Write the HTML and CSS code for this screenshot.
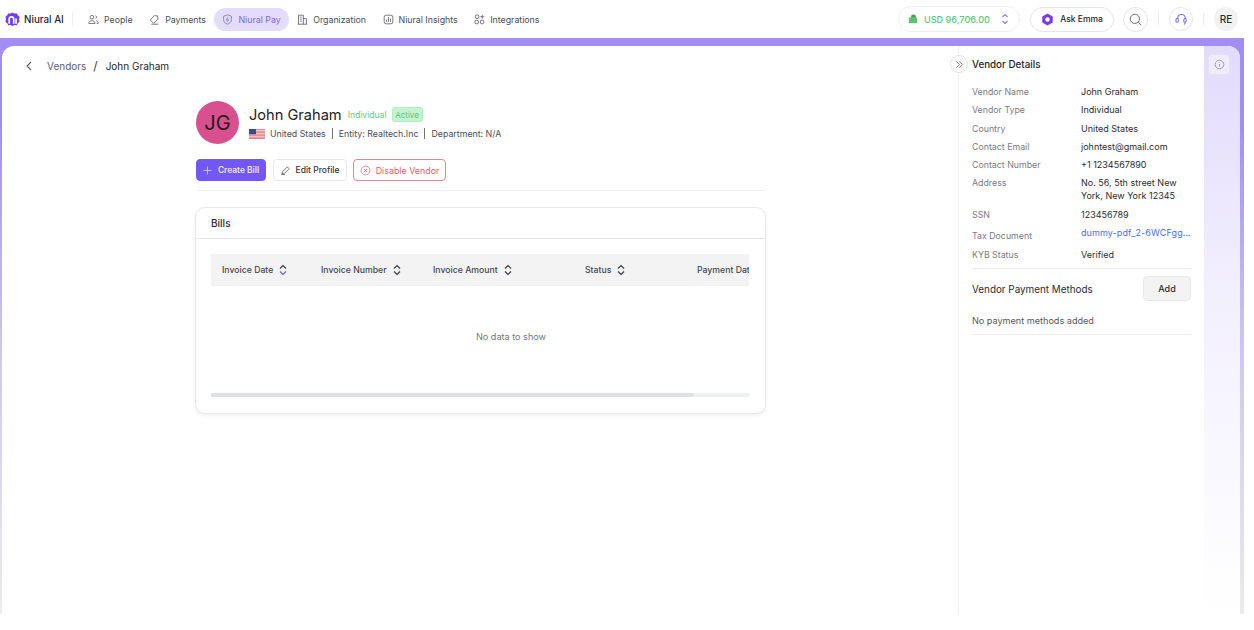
FILE: index.html
```html
<!DOCTYPE html>
<html lang="en">
<head>
<meta charset="utf-8">
<title>Vendor - John Graham</title>
<link rel="stylesheet" href="styles.css">
</head>
<body>
<div class="page">
  <header class="topbar">
    <div class="brand">
      <svg class="logo" viewBox="0 0 16 16"><path d="M8 .5l2 1.200 2.600-.2 1 2 1.900 1.600-.5 2.600.5 2.600-1.900 1.700-1 2-2.600-.2-2 1.200-2-1.200-2.600.2-1-2L.5 10.300l.5-2.600L.5 5.100l1.900-1.600 1-2 2.600.2z" fill="#6f3ff0"/><path d="M4.500 12.500V7.500a2.400 2.400 0 0 1 4.800 0v5" fill="none" stroke="#fff" stroke-width="1.800"/><path d="M11.800 7v5.500" stroke="#fff" stroke-width="1.800"/></svg>
      <span class="brand-name">Niural AI</span>
    </div>
    <nav class="nav">
      <a class="nav-item"><svg class="nav-icon" viewBox="0 0 14 14"><circle cx="5" cy="4" r="2.300"/><path d="M1 12c0-2.200 1.800-3.500 4-3.500s4 1.300 4 3.500zM9.500 2a2.200 2.200 0 0 1 0 4M10.500 8.500c1.500.3 2.500 1.400 2.500 3.500h-2"/></svg>People</a>
      <a class="nav-item"><svg class="nav-icon" viewBox="0 0 14 14"><path d="M1.500 7.500L7 2l4 .5.500 4L6 12zM9 4.500h.01M3 13h9"/></svg>Payments</a>
      <a class="nav-item active"><svg class="nav-icon" viewBox="0 0 14 14"><path d="M7 1l5 2v4c0 3-2.200 5-5 6-2.800-1-5-3-5-6V3z"/><path d="M7.800 4L5.500 7.500h3L6.200 10"/></svg>Niural Pay</a>
      <a class="nav-item"><svg class="nav-icon" viewBox="0 0 14 14"><path d="M2 13V1.500h6V13M8 6h4v7M1 13h12M4 4h2M4 6.500h2M4 9h2M10 8.500v.01M10 10.500v.01"/></svg>Organization</a>
      <a class="nav-item"><svg class="nav-icon" viewBox="0 0 14 14"><rect x="1.500" y="1.500" width="11" height="11" rx="2.500"/><path d="M4.500 10V7M7 10V4M9.500 10V6"/></svg>Niural Insights</a>
      <a class="nav-item"><svg class="nav-icon" viewBox="0 0 14 14"><circle cx="4" cy="3.500" r="2.400"/><circle cx="3.500" cy="10.200" r="2.400"/><circle cx="10.300" cy="10.200" r="2.400"/><path d="M10.500 1v5M8 3.500h5"/></svg>Integrations</a>
    </nav>
    <div class="actions">
      <button class="balance">
        <svg class="wallet" viewBox="0 0 12 12"><path d="M1 4.500h10V11H1z" fill="#5cc46f"/><path d="M3 4.500L4.500 1h4L10 4.500z" fill="#3f9f52"/></svg>
        <span class="balance-text">USD 96,706.00</span>
        <svg class="updown" viewBox="0 0 10 14"><path d="M2.500 5L5 2.500 7.500 5M2.500 9L5 11.500 7.500 9"/></svg>
      </button>
      <button class="ask">
        <svg class="ask-icon" viewBox="0 0 14 14"><path d="M7 .5l5.600 3.200v6.600L7 13.500l-5.600-3.200V3.700z" fill="#7c3aed"/><circle cx="7" cy="7" r="2.400" fill="#fff"/></svg>
        Ask Emma
      </button>
      <button class="round"><svg class="search" viewBox="0 0 16 16"><circle cx="7.200" cy="7.200" r="5.700"/><path d="M11.500 11.500L15 15"/></svg></button>
      <span class="vr"></span>
      <button class="round small"><svg class="support" viewBox="0 0 14 14"><path d="M3 6.500V5.500a4 4 0 0 1 8 0v1M9.500 12c1 0 1.500-.5 1.500-1.500"/><rect x="1" y="6" width="2.500" height="4" rx="1.200"/><rect x="9.500" y="6" width="2.500" height="4" rx="1.200"/></svg></button>
      <span class="vr"></span>
      <span class="me">RE</span>
    </div>
  </header>

  <div class="shell">
    <div class="sheet">
      <main class="content">
        <div class="crumbs">
          <svg class="back" viewBox="0 0 6 10"><path d="M5 1L1 5l4 4"/></svg>
          <span class="crumb-link">Vendors</span>
          <span class="crumb-sep">/</span>
          <span class="crumb-now">John Graham</span>
        </div>
        <section class="vendor">
          <div class="profile">
            <div class="avatar">JG</div>
            <div class="who">
              <div class="name-row">
                <span class="name">John Graham</span>
                <span class="kind">Individual</span>
                <span class="badge">Active</span>
              </div>
              <div class="meta">
                <svg class="flag" viewBox="0 0 16 10"><rect width="16" height="10" fill="#fff"/><path d="M0 .7h16M0 2.200h16M0 3.700h16M0 5.200h16M0 6.700h16M0 8.200h16M0 9.600h16" stroke="#d8505a" stroke-width=".8"/><rect width="7" height="5.200" fill="#3c4a8c"/></svg>
                <span class="meta-item">United States</span>
                <span class="meta-item sep">Entity: Realtech.Inc</span>
                <span class="meta-item sep">Department: N/A</span>
              </div>
            </div>
          </div>
          <div class="buttons">
            <button class="btn primary"><svg class="plus" viewBox="0 0 10 10"><path d="M5 .5v9M.5 5h9"/></svg>Create Bill</button>
            <button class="btn ghost"><svg class="pencil" viewBox="0 0 10 10"><path d="M1 9l.5-2.500L7 1l2 2-5.500 5.500zM.5 9.500h4"/></svg>Edit Profile</button>
            <button class="btn danger"><svg class="cancel" viewBox="0 0 12 12"><circle cx="6" cy="6" r="4.800"/><path d="M4.300 4.300l3.400 3.400M7.700 4.300L4.300 7.700"/></svg>Disable Vendor</button>
          </div>
          <div class="card">
            <div class="card-head">Bills</div>
            <div class="card-body">
              <div class="thead">
                <div class="th col-a">Invoice Date<svg class="sort first" viewBox="0 0 10 14"><path class="up" d="M2 5.500L5 2.500l3 3"/><path class="down" d="M2 8.500l3 3 3-3"/></svg></div>
                <div class="th col-b">Invoice Number<svg class="sort" viewBox="0 0 10 14"><path class="up" d="M2 5.500L5 2.500l3 3"/><path class="down" d="M2 8.500l3 3 3-3"/></svg></div>
                <div class="th col-c">Invoice Amount<svg class="sort" viewBox="0 0 10 14"><path class="up" d="M2 5.500L5 2.500l3 3"/><path class="down" d="M2 8.500l3 3 3-3"/></svg></div>
                <div class="th col-d">Status<svg class="sort" viewBox="0 0 10 14"><path class="up" d="M2 5.500L5 2.500l3 3"/><path class="down" d="M2 8.500l3 3 3-3"/></svg></div>
                <div class="th col-e">Payment Date</div>
              </div>
              <div class="empty">No data to show</div>
              <div class="scroll"><div class="thumb"></div></div>
            </div>
          </div>
        </section>
      </main>

      <aside class="details">
        <button class="collapse"><svg viewBox="0 0 10 10"><path d="M1.500 1.500L5 5 1.500 8.500M5 1.500L8.500 5 5 8.500"/></svg></button>
        <h2 class="details-title">Vendor Details</h2>
        <dl class="facts">
          <div class="fact"><dt>Vendor Name</dt><dd>John Graham</dd></div>
          <div class="fact"><dt>Vendor Type</dt><dd>Individual</dd></div>
          <div class="fact"><dt>Country</dt><dd>United States</dd></div>
          <div class="fact"><dt>Contact Email</dt><dd>johntest@gmail.com</dd></div>
          <div class="fact"><dt>Contact Number</dt><dd>+1 1234567890</dd></div>
          <div class="fact"><dt>Address</dt><dd>No. 56, 5th street New York, New York 12345</dd></div>
          <div class="fact"><dt>SSN</dt><dd>123456789</dd></div>
          <div class="fact doc"><dt>Tax Document</dt><dd class="link">dummy-pdf_2-6WCFgg...</dd></div>
          <div class="fact"><dt>KYB Status</dt><dd>Verified</dd></div>
        </dl>
        <div class="methods">
          <span class="methods-title">Vendor Payment Methods</span>
          <button class="add">Add</button>
        </div>
        <p class="none">No payment methods added</p>
      </aside>

      <div class="rail">
        <button class="info"><svg viewBox="0 0 12 12"><circle cx="6" cy="6" r="4.700"/><path d="M6 5.500v3M6 3.500v.5"/></svg></button>
      </div>
    </div>
  </div>
</div>
</body>
</html>
```
FILE: styles.css
```css
* { box-sizing: border-box; }
html, body { margin: 0; padding: 0; background: #fff; }
body { font-family: Inter, "Liberation Sans", sans-serif; color: #1f2024; }
button { font-family: inherit; cursor: pointer; }
svg { display: block; flex: none; }

.page { width: 1244px; height: 614px; display: flex; flex-direction: column; }

/* top bar */
.topbar { height: 38px; flex: none; display: flex; align-items: center; padding-left: 5px; padding-right: 6px; }
.brand { display: flex; align-items: center; gap: 4px; width: 68px; height: 14px; border-right: 1px solid #eeeeee; }
.logo { width: 15px; height: 15px; }
.brand-name { font-size: 9.800px; font-weight: 500; color: #25262b; white-space: nowrap; }
.nav { display: flex; align-items: center; margin-left: 7px; gap: 0.5px; }
.nav-item { display: flex; align-items: center; gap: 5px; height: 23px; padding: 0 8px; border-radius: 12px; font-size: 8.800px; color: #4b4d55; white-space: nowrap; }
.nav-icon { width: 11px; height: 11px; fill: none; stroke: #55575e; stroke-width: 1; }
.nav-item.active { background: #e3dcfb; color: #7b68df; }
.nav-item.active .nav-icon { stroke: #7b68df; }
.actions { margin-left: auto; display: flex; align-items: center; }
.balance { width: 122px; height: 26px; display: flex; align-items: center; padding: 0 9px; background: #fff; border: 1px solid #eeeef0; border-radius: 13px; }
.wallet { width: 10px; height: 10px; }
.balance-text { margin-left: 6px; font-size: 9.100px; font-weight: 500; color: #55cc76; white-space: nowrap; }
.updown { width: 10px; height: 14px; margin-left: auto; fill: none; stroke: #8f7be8; stroke-width: 1.200; }
.ask { margin-left: 10px; width: 84px; height: 25px; display: flex; align-items: center; justify-content: center; gap: 6px; background: #fff; border: 1px solid #e6e6e8; border-radius: 13px; font-size: 8.500px; font-weight: 500; color: #25262b; }
.ask-icon { width: 13px; height: 13px; }
.round { margin-left: 9px; width: 25px; height: 25px; padding: 0; display: flex; align-items: center; justify-content: center; background: #fff; border: 1px solid #e6e6e8; border-radius: 50%; }
.round.small { margin-left: 10px; width: 24px; height: 24px; }
.search { width: 13px; height: 13px; fill: none; stroke: #5c5e65; stroke-width: 1.100; }
.support { width: 13px; height: 13px; fill: none; stroke: #7b68df; stroke-width: 1.100; }
.vr { width: 1px; height: 12px; margin-left: 10px; background: #ececec; }
.me { margin-left: 10px; width: 24px; height: 24px; display: flex; align-items: center; justify-content: center; border-radius: 50%; background: #f2f2f2; font-size: 10px; font-weight: 500; color: #2a2b30; }

/* shell */
.shell { flex: 1; min-height: 0; padding: 8px 4px 0 2px; background: linear-gradient(180deg, #a28ef2 0%, #a28ef2 15%, #d0c8f0 55%, #ebebeb 100%); }
.sheet { height: 100%; display: flex; background: #fff; border-radius: 12px 12px 0 0; overflow: hidden; }

.content { width: 956px; flex: none; }
.crumbs { display: flex; align-items: center; height: 39px; padding-left: 24px; font-size: 10px; }
.back { width: 6px; height: 10px; fill: none; stroke: #5f6167; stroke-width: 1.100; }
.crumb-link { margin-left: 15px; color: #5c5e65; }
.crumb-sep { margin-left: 7px; color: #3a3b40; font-size: 12px; }
.crumb-now { margin-left: 8px; color: #25262b; }

.vendor { margin-left: 194px; width: 569px; }
.profile { display: flex; align-items: center; gap: 10px; margin-top: 16px; height: 43px; padding-bottom: 1px; }
.avatar { width: 43px; height: 43px; flex: none; border-radius: 50%; background: #d9508f; display: flex; align-items: center; justify-content: center; font-size: 20px; color: #1e1a22; margin-bottom: -1px; }
.who { display: flex; flex-direction: column; gap: 3px; }
.name-row { display: flex; align-items: center; height: 20px; }
.name { font-size: 14.600px; color: #212226; }
.kind { margin-left: 6px; font-size: 8.600px; color: #62c987; }
.badge { margin-left: 5px; width: 31px; height: 15px; display: flex; align-items: center; justify-content: center; border-radius: 3px; background: #c4f3cf; border: 1px solid #b2ecc1; font-size: 8px; color: #5cc57b; }
.meta { display: flex; align-items: center; font-size: 8.800px; color: #4b4d55; height: 12px; }
.flag { width: 16px; height: 10px; margin-right: 5px; }
.meta-item { white-space: nowrap; }
.meta-item.sep { margin-left: 6px; padding-left: 6px; border-left: 1px solid #77736a; }

.buttons { display: flex; align-items: center; gap: 7px; margin-top: 15px; padding-bottom: 9px; border-bottom: 1px solid #f0f0f0; }
.btn { height: 22px; display: flex; align-items: center; justify-content: center; padding: 0; border-radius: 4px; white-space: nowrap; }
.btn.primary { width: 70px; gap: 6px; background: #7257f5; border: 1px solid #7257f5; color: #e9e5ff; font-weight: 600; font-size: 8.400px; }
.btn.ghost { width: 74px; gap: 6px; background: #fff; border: 1px solid #e8e8e8; color: #33343a; font-weight: 500; font-size: 8.500px; }
.btn.danger { width: 93px; gap: 5px; margin-left: -1px; background: #fff; border: 1px solid #d98a94; color: #ea5a66; font-size: 8.900px; }
.plus { width: 9px; height: 9px; fill: none; stroke: #cfc6ff; stroke-width: 1; }
.pencil { width: 9px; height: 9px; fill: none; stroke: #55575e; stroke-width: .9; }
.cancel { width: 11px; height: 11px; fill: none; stroke: #ea6a75; stroke-width: .9; }

.card { margin-top: 16px; margin-left: -1px; width: 571px; height: 207px; background: #fff; border: 1px solid #e8e8ea; border-radius: 10px; box-shadow: 0 2px 4px rgba(0, 0, 0, .06); }
.card-head { height: 31px; display: flex; align-items: center; padding-left: 15px; border-bottom: 1px solid #e8e8ea; font-size: 10px; font-weight: 500; color: #2a2b30; }
.card-body { padding: 15px 16px 0 15px; }
.thead { height: 32px; display: flex; align-items: center; overflow: hidden; background: #f3f3f3; font-size: 8.700px; color: #45474e; }
.th { display: flex; align-items: center; gap: 5px; flex: none; padding-left: 11px; white-space: nowrap; font-weight: 500; }
.col-a { width: 99px; }
.col-b { width: 112px; }
.col-c { width: 152px; }
.col-d { width: 112px; }
.col-e { width: 100px; }
.sort { width: 10px; height: 14px; fill: none; stroke: #3a3b40; stroke-width: 1.200; }
.sort.first .down { stroke: #7257f5; }
.empty { height: 107px; display: flex; align-items: center; justify-content: center; font-size: 9.100px; color: #74767c; padding-left: 62px; padding-bottom: 6px; }
.scroll { height: 4px; background: #eef0f2; border-radius: 1px; }
.thumb { width: 482px; height: 100%; background: #dfe0e2; border-radius: 1px; }

/* details */
.details { width: 246px; flex: none; position: relative; border-left: 1px solid #efedf6; padding: 0 13px 0 13px; }
.collapse { position: absolute; left: -9px; top: 9px; width: 18px; height: 18px; padding: 0; display: flex; align-items: center; justify-content: center; background: #fff; border: 1px solid #e4e4e6; border-radius: 50%; }
.collapse svg { width: 9px; height: 9px; fill: none; stroke: #5f6167; stroke-width: .9; }
.details-title { margin: 0; height: 36px; display: flex; align-items: center; font-size: 9.800px; font-weight: 500; color: #25262b; }
.facts { margin: 0; padding-top: 3px; padding-bottom: 2px; border-bottom: 1px solid #eeeeee; }
.fact { display: flex; font-size: 8.800px; line-height: 13px; margin-bottom: 5.300px; }
.fact dt { width: 109px; flex: none; color: #7a7c82; }
.fact dd { margin: 0; width: 110px; color: #2a2b30; font-weight: 400; font-size: 9px; }
.fact.doc { margin-top: 8px; margin-bottom: 6px; }
.fact.doc dd { margin-top: -3px; }
.fact dd.link { color: #4a6fe0; white-space: nowrap; letter-spacing: .08px; }
.methods { display: flex; align-items: center; justify-content: space-between; height: 25px; margin-top: 7px; }
.methods-title { font-size: 9.900px; color: #2a2b30; }
.add { width: 48px; height: 25px; padding: 0; background: #f3f3f3; border: 1px solid #e9e9e9; border-radius: 4px; font-size: 9px; font-weight: 500; color: #2a2b30; }
.none { margin: 6px 0 0; height: 28px; display: flex; align-items: center; border-bottom: 1px solid #eeeeee; font-size: 9.100px; color: #55575e; }

.rail { flex: 1; background: linear-gradient(180deg, #e2dbfc 0%, #f3f0fe 45%, #fff 100%); padding: 8px 0 0 4px; }
.info { width: 22px; height: 21px; padding: 0; display: flex; align-items: center; justify-content: center; background: #f0edf8; border: 1px solid #e6e3ee; border-radius: 4px; }
.info svg { width: 11px; height: 11px; fill: none; stroke: #9c87ee; stroke-width: 1; }
```
